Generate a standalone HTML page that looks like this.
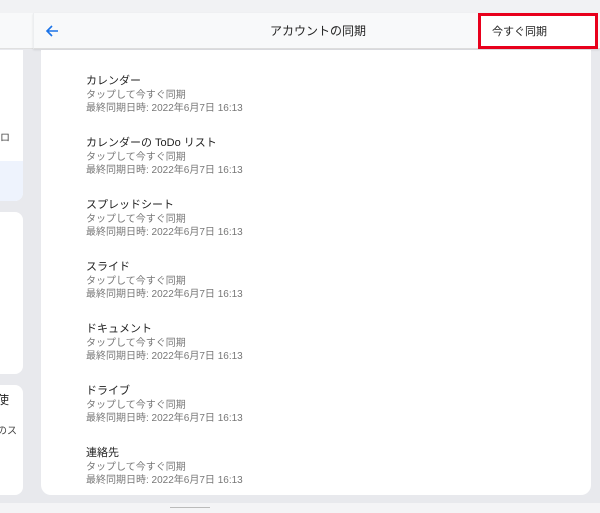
<!DOCTYPE html><html><head><meta charset="utf-8"><style>
body{margin:0;width:600px;height:513px;background:#e8e9ed;position:relative;overflow:hidden;font-family:"Liberation Sans","Noto Sans CJK JP",sans-serif}
div{position:absolute;box-sizing:border-box}
.t{left:86px;font-size:11px;color:#222}
.s{left:86px;font-size:10px;color:#777}
</style></head><body>
<div style="left:0;top:0;width:600px;height:13px;background:#f1f2f4"></div>
<div style="left:0;top:13px;width:33px;height:36px;background:#f8f9fa;border-bottom:1px solid #e0e0e0"></div>
<div style="left:33px;top:13px;width:567px;height:36px;background:#f8f9fa;border-left:1px solid #eceef0;border-bottom:1px solid #ddd;box-shadow:0 1px 2px rgba(0,0,0,.1)"></div>
<svg style="position:absolute;left:44px;top:23px" width="16" height="16" viewBox="0 0 16 16"><path d="M14 8H3M8 3L3 8l5 5" stroke="#1a73e8" stroke-width="1.6" fill="none"/></svg>
<div style="left:270px;top:22px;font-size:12px;color:#222">アカウントの同期</div>
<div style="left:478px;top:13px;width:120px;height:36px;border:3px solid #e8001c;background:#fff"></div>
<div style="left:492px;top:23px;font-size:11px;color:#222">今すぐ同期</div>
<div style="left:0;top:50px;width:23px;height:151px;background:#fff;border-radius:0 0 8px 0;overflow:hidden"><div style="left:0;top:111px;width:23px;height:40px;background:#eef3fd"></div><div style="left:0;top:79px;font-size:10px;color:#444">ロ</div></div>
<div style="left:0;top:212px;width:23px;height:162px;background:#fff;border-radius:0 8px 8px 0"></div>
<div style="left:0;top:385px;width:23px;height:110px;background:#fff;border-radius:0 8px 8px 0"><div style="left:-3px;top:6px;font-size:12px;color:#222">使</div><div style="left:-3px;top:37px;font-size:10px;color:#444">のス</div></div>
<div style="left:41px;top:50px;width:550px;height:445px;background:#fff;border-radius:0 0 10px 10px"></div>
<div style="left:0;top:503px;width:600px;height:10px;background:#f4f4f6"></div>
<div style="left:170px;top:507px;width:40px;height:1px;background:#bbb"></div>
<div class="t" style="top:72px">カレンダー</div><div class="s" style="top:86px">タップして今すぐ同期</div><div class="s" style="top:99px">最終同期日時: 2022年6月7日 16:13</div>
<div class="t" style="top:134px">カレンダーの ToDo リスト</div><div class="s" style="top:148px">タップして今すぐ同期</div><div class="s" style="top:161px">最終同期日時: 2022年6月7日 16:13</div>
<div class="t" style="top:196px">スプレッドシート</div><div class="s" style="top:210px">タップして今すぐ同期</div><div class="s" style="top:223px">最終同期日時: 2022年6月7日 16:13</div>
<div class="t" style="top:258px">スライド</div><div class="s" style="top:272px">タップして今すぐ同期</div><div class="s" style="top:285px">最終同期日時: 2022年6月7日 16:13</div>
<div class="t" style="top:320px">ドキュメント</div><div class="s" style="top:334px">タップして今すぐ同期</div><div class="s" style="top:347px">最終同期日時: 2022年6月7日 16:13</div>
<div class="t" style="top:382px">ドライブ</div><div class="s" style="top:396px">タップして今すぐ同期</div><div class="s" style="top:409px">最終同期日時: 2022年6月7日 16:13</div>
<div class="t" style="top:444px">連絡先</div><div class="s" style="top:458px">タップして今すぐ同期</div><div class="s" style="top:471px">最終同期日時: 2022年6月7日 16:13</div>
</body></html>
